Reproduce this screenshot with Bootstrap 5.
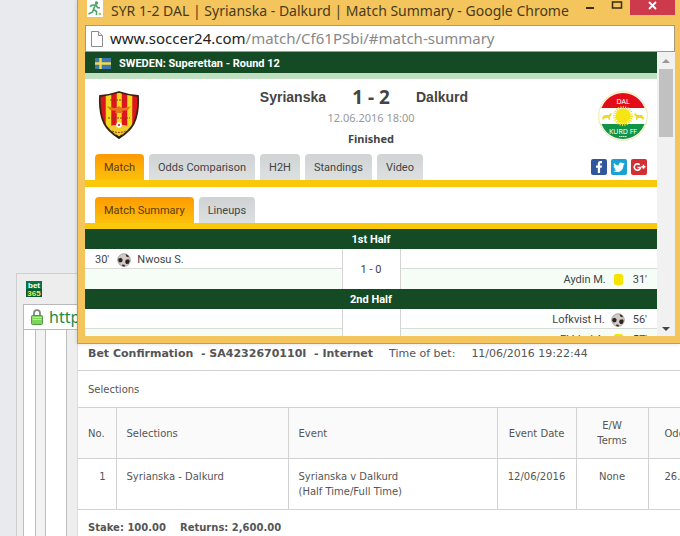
<!DOCTYPE html>
<html lang="en">
<head>
<meta charset="utf-8">
<meta name="viewport" content="width=device-width, initial-scale=1">
<title>SYR 1-2 DAL | Syrianska - Dalkurd | Match Summary</title>
<link rel="stylesheet" href="https://cdn.jsdelivr.net/npm/bootstrap@5.3.0/dist/css/bootstrap.min.css">
<style>
  body { font-family: "Noto Sans", sans-serif; background: #e9eaee; }
  svg { display: block; flex: none; }
  .desktop { background: #e9eaee; }

  /* bet slip window */
  .slip-window { left: 16px; right: 0; top: 273px; bottom: 0; background: #ededee; border: 1px solid #cfcfcf; border-width: 1px 0 0 1px; padding-left: 6px; }
  .slip-title { height: 30px; padding: 7px 3px; }
  .slip-url { height: 27px; border: 1px solid #b9b9b9; border-right: 0; padding-left: 7px; font-size: 16px; gap: 6px; }
  .slip-url a { color: #218a46; }
  .slip-body { border-left: 1px solid #bdbdbd; }
  .gutter-a { width: 11px; border: 1px solid #bdbdbd; border-width: 0 1px; background: #f2f2f2; margin-left: 11px; }
  .gutter-b { width: 32px; background: linear-gradient(90deg, #fff 20px, #bdbdbd 20px, #bdbdbd 21px, #eee 21px, #eee 31px, #dcdcdc 31px); }
  .slip-page { font: 10px/15px "DejaVu Sans", sans-serif; color: #555; }
  .slip-head { font-size: 11px; line-height: 15px; padding: 16px 10px 9px; border-bottom: 1px solid #d2d2d2; height: 41px; gap: 16px; }
  .slip-label { padding: 11px 10px 10px; height: 36px; }
  .bets { width: 642px; table-layout: fixed; border-collapse: collapse; }
  .bets th, .bets td { border: 1px solid #d2d2d2; border-left: 0; padding: 10px; height: 51px; font-weight: 400; }
  .bets th { background: #fafafa; vertical-align: middle; }
  .bets td { vertical-align: top; }
  .bets .c-date { padding-left: 4px; padding-right: 4px; }
  .bets .c-odds { padding-left: 16px; }
  .slip-total { padding: 10px; gap: 14px; }

  /* match window */
  .match-window { left: 77px; right: 0; top: 0; height: 344px; background: #f4c55c; border: 1px solid #c99b3d; border-top: 0; border-right: 0; padding: 0 5px 7px 7px; box-shadow: 0 0 4px rgba(0,0,0,.15); }
  .title-bar { height: 25px; color: #4a3a1a; font-size: 14px; line-height: 21px; padding-left: 2px; }
  .win-btn { border: 0; background: none; padding: 0; height: 15px; }
  .win-btn-min { width: 28px; }
  .win-btn-max { width: 26px; }
  .win-btn-close { width: 45px; background: #cc3a4b; }
  .address { height: 27px; border: 1px solid #a99a74; border-bottom-color: #999; background: #fff; padding-left: 5px; font-size: 15px; color: #222; gap: 7px; }
  .address span span { color: #888; }
  .page-area { background: #fff; font: 11px/14px Roboto, sans-serif; color: #444; }
  .league { background: #144b25; color: #fff; height: 21px; padding: 2px 0 0 10px; }
  .league-strip { background: #bfdfc0; height: 6px; }
  .match-head { padding: 8px 9px 0; height: 75px; }
  .result { font-family: "Noto Sans", sans-serif; }
  .team-name { font: 700 14px/18px "Liberation Sans", sans-serif; flex: 1 1 0; }
  .score { font-size: 19px; line-height: 20px; width: 90px; }
  .kickoff { color: #999; margin-top: 4px; }
  .status { margin-top: 7px; }
  .tab-strip { border-bottom: 7px solid #fac80b; padding: 0 10px; gap: 5px; }
  .tab-strip.second { border-bottom-width: 6px; margin-top: 10px; }
  .tab-btn { border: 0; border-radius: 4px 4px 0 0; height: 26px; padding: 2px 9px 0; background: linear-gradient(#cfd3d3, #dde0e0); color: #444; line-height: 24px; }
  .tab-btn.current { background: linear-gradient(#ff9a02, #fcc00a); color: #5c3b05; }
  .events { table-layout: fixed; border-collapse: separate; border-spacing: 0; width: 100%; }
  .events .mid { width: 59px; }
  .events th { background: #144b25; color: #fff; height: 20px; text-align: center; padding: 1px 0 0; }
  .events td { height: 20px; padding: 2px 10px 0; border-bottom: 1px solid #d8ddd8; }
  .events tr.alt td { background: #f6fdf6; border-bottom-color: #f6fdf6; }
  .events td.mid-score { background: #fff; border: 1px solid #d4d4d4; border-width: 0 1px; text-align: center; padding: 2px 0 0; }
  .ycard { width: 9px; height: 11px; border-radius: 2px; background: #f5e400; margin: 0 10px 0 8px; }
  .events svg { margin: 0 6px 0 8px; }
  .events .away svg { margin: 0 8px 0 6px; }
  .scroll-rail { width: 18px; background: #f1f1f1; padding: 7px 2px 5px; }
  .scroll-thumb { width: 14px; height: 68px; background: #c1c1c1; margin-top: 6px; }
</style>
<script src="https://cdn.jsdelivr.net/npm/bootstrap@5.3.0/dist/js/bootstrap.bundle.min.js"></script>
</head>
<body>
<svg width="0" height="0" class="position-absolute" aria-hidden="true">
  <symbol id="ball" viewBox="0 0 14 14">
    <circle cx="7" cy="7" r="6.3" fill="#d3ccc6" stroke="#9a948e" stroke-width=".8"/>
    <path d="M1.500 5.500l2.500-.8 1.700 1.800-.6 2.600-2.600.3-1.300-1.700zM8.500 1l2.700 1.500.8 1.700-2.500-.5zM8.800 6.800l2.700-.6 1.300 1.800-1.200 2.700-2.500.2-1-2zM5 11.500l2.500.3.500 1.700-2.500-.3z" fill="#2b2422"/>
  </symbol>
</svg>
<main class="desktop position-relative vh-100 overflow-hidden">

  <section class="slip-window position-absolute d-flex flex-column">
    <div class="slip-title">
      <svg width="16" height="16" viewBox="0 0 16 16" role="img" aria-label="bet365"><rect width="16" height="16" fill="#08733f"/><rect y="8" width="16" height="8" fill="#075a32"/><text x="8" y="7" text-anchor="middle" font-family="Liberation Sans" font-weight="700" font-size="8" fill="#fff">bet</text><text x="8" y="15" text-anchor="middle" font-family="Liberation Sans" font-weight="700" font-size="8" fill="#f5e94a">365</text></svg>
    </div>
    <div class="slip-url bg-white d-flex align-items-center">
      <svg width="12" height="16" viewBox="0 0 12 16"><path d="M3 8V4.200a3 3 0 0 1 6 0V8" fill="none" stroke="#7d8a7d" stroke-width="1.800"/><rect x=".5" y="6.500" width="11" height="9" rx="1" fill="#7fd35f" stroke="#4f9a3c"/><path d="M1.500 8.500h9M1.500 10.500h9" stroke="#b2ec98"/></svg>
      <a href="#" class="text-decoration-none">https</a>
    </div>
    <div class="slip-body d-flex flex-grow-1 bg-white overflow-hidden">
      <div class="gutter-a flex-shrink-0"></div>
      <div class="gutter-b flex-shrink-0"></div>
      <div class="slip-page flex-grow-1 overflow-hidden">
        <div class="slip-head d-flex text-nowrap"><b>Bet Confirmation &nbsp;- SA4232670110I &nbsp;- Internet</b><span>Time of bet:</span><span>11/06/2016 19:22:44</span></div>
        <div class="slip-label">Selections</div>
        <table class="bets">
          <colgroup><col style="width:38px"><col style="width:172px"><col style="width:209px"><col style="width:79px"><col style="width:72px"><col style="width:72px"></colgroup>
          <thead><tr><th>No.</th><th>Selections</th><th>Event</th><th class="c-date text-center">Event Date</th><th class="text-center">E/W Terms</th><th class="c-odds">Odds</th></tr></thead>
          <tbody><tr><td class="text-end">1</td><td>Syrianska - Dalkurd</td><td>Syrianska v Dalkurd<br>(Half Time/Full Time)</td><td class="c-date text-center">12/06/2016</td><td class="text-center">None</td><td class="c-odds">26.00</td></tr></tbody>
        </table>
        <div class="slip-total d-flex fw-bold"><span>Stake: 100.00</span><span>Returns: 2,600.00</span></div>
      </div>
    </div>
  </section>

  <section class="match-window position-absolute d-flex flex-column">
    <header class="title-bar d-flex align-items-start flex-shrink-0">
      <svg width="16" height="17" viewBox="0 0 16 17"><rect width="16" height="17" fill="#fff"/><circle cx="9.500" cy="3" r="1.700" fill="#4aa564"/><path d="M3 6.500 5.500 5h3.500l1.500 2.500 2.500.5M8 5.500 6.500 9.500l3 2V15M6.500 9.500 5.500 12l-4 2" fill="none" stroke="#4aa564" stroke-width="1.600"/><circle cx="12.800" cy="14" r="1.300" fill="#9cc94f"/></svg>
      <div class="ms-2 flex-grow-1 text-nowrap">SYR 1-2 DAL | Syrianska - Dalkurd | Match Summary - Google Chrome</div>
      <button type="button" class="win-btn win-btn-min" aria-label="Minimize"><svg width="28" height="15"><path d="M10 8h8" stroke="#3a2b12" stroke-width="2"/></svg></button>
      <button type="button" class="win-btn win-btn-max" aria-label="Maximize"><svg width="26" height="15"><path d="M8.500 2h9v6h-9z" fill="none" stroke="#3a2b12" stroke-width="1.500"/></svg></button>
      <button type="button" class="win-btn win-btn-close" aria-label="Close"><svg width="45" height="15"><path d="m19 2 7 7M26 2l-7 7" stroke="#fff" stroke-width="1.800"/></svg></button>
    </header>
    <div class="address d-flex align-items-center flex-shrink-0">
      <svg width="12" height="16" viewBox="0 0 12 16"><path d="M.5.500h7l4 4v11H.5z" fill="#fff" stroke="#8a8a8a"/><path d="M7.500.500v4h4" fill="#eee" stroke="#8a8a8a"/></svg>
      <span>www.soccer24.com<span>/match/Cf61PSbi/#match-summary</span></span>
    </div>
    <div class="page-area d-flex flex-grow-1 overflow-hidden">
      <div class="flex-grow-1 overflow-hidden">
        <div class="league d-flex align-items-center fw-bold">
          <svg width="16" height="11" viewBox="0 0 16 11"><rect width="16" height="11" fill="#3d78b0"/><path d="M0 5.500h16M5.500 0v11" stroke="#f0dc4a" stroke-width="2.400"/></svg>
          <span class="ms-2">SWEDEN: Superettan - Round 12</span>
        </div>
        <div class="league-strip"></div>
        <div class="match-head d-flex justify-content-between">
          <svg class="mt-1 ms-1 me-1" width="42" height="48" viewBox="0 0 42 48" role="img" aria-label="Syrianska crest">
            <clipPath id="shield"><path d="M2 5Q12 4 21 1q9 3 19 4 1 16-4 27-4 8-15 15Q10 40 6 32 1 21 2 5z"/></clipPath>
            <g clip-path="url(#shield)"><rect width="42" height="48" fill="#f8d81c"/><path d="M5 0v36M16 0v36M26.500 0v36M37 0v36" stroke="#dd151c" stroke-width="5.500"/><path d="M4 37l12-3h10l12 3v11H4z" fill="#f2cd2a"/></g>
            <path d="M2 5Q12 4 21 1q9 3 19 4 1 16-4 27-4 8-15 15Q10 40 6 32 1 21 2 5z" fill="none" stroke="#3c2310" stroke-width="1.800"/>
            <path d="M9 15q6 2 9 2l3-2 3 2q3 0 9-2l-3 4-6 1 1 2h-8l1-2-6-1z" fill="#e8741c"/>
            <path d="M12 9h18M10 27h22M14 40q7 3 14 0" fill="none" stroke="#8f3a13" stroke-width="1" stroke-dasharray="2 1"/>
            <circle cx="21" cy="34" r="2.800" fill="#fff"/><circle cx="21" cy="34" r="1" fill="#9b1c25"/><path d="M18 44l3 2.500 3-2.500" fill="none" stroke="#1a1a1a" stroke-width="1.500"/>
          </svg>
          <div class="result flex-grow-1 text-center">
            <div class="d-flex align-items-center fw-bold"><span class="team-name text-end">Syrianska</span><span class="score">1 - 2</span><span class="team-name text-start">Dalkurd</span></div>
            <div class="kickoff">12.06.2016 18:00</div>
            <div class="status fw-bold">Finished</div>
          </div>
          <svg class="mt-1" width="50" height="50" viewBox="0 0 50 50" role="img" aria-label="Dalkurd crest">
            <clipPath id="disc"><circle cx="25" cy="25" r="23"/></clipPath>
            <circle cx="25" cy="25" r="24.300" fill="#fff" stroke="#f3e7a0"/>
            <g clip-path="url(#disc)"><rect width="50" height="17" fill="#e30d17"/><rect y="33" width="50" height="17" fill="#109447"/></g>
            <circle cx="25" cy="25" r="8.500" fill="none" stroke="#f4e01a" stroke-width="3" stroke-dasharray="1 1.200"/><circle cx="25" cy="25" r="7.500" fill="#f6e515"/>
            <path d="M4 27l2-3h5l1.500-2 1.500 1-2 3v3h-1l-1-2H7l-2 2zM46 27l-2-3h-5l-1.500-2-1.500 1 2 3v3h1l1-2h3l2 2z" fill="#eadb2a"/>
            <text x="25" y="13" text-anchor="middle" font-family="Noto Sans" font-size="7" fill="#fff">DAL</text>
            <text x="25" y="43" text-anchor="middle" font-family="Noto Sans" font-size="7" fill="#fff">KURD FF</text>
            <path d="M21 45.500h8" stroke="#d8efdf" stroke-width="1" stroke-dasharray="1.500 .5"/>
          </svg>
        </div>
        <nav class="tab-strip d-flex align-items-end">
          <button type="button" class="tab-btn current">Match</button><button type="button" class="tab-btn">Odds Comparison</button><button type="button" class="tab-btn">H2H</button><button type="button" class="tab-btn">Standings</button><button type="button" class="tab-btn">Video</button>
          <div class="ms-auto d-flex gap-1 align-self-center">
            <a href="#" aria-label="Facebook"><svg width="16" height="16" viewBox="0 0 16 16"><rect width="16" height="16" rx="2" fill="#30579b"/><path d="M6.800 14V8.800H5V6.600h1.800V5c0-1.900 1-2.900 2.700-2.900h1.500v2.200H10c-.7 0-.9.300-.9.900v1.400H11l-.3 2.200H9.100V14z" fill="#fff"/></svg></a>
            <a href="#" aria-label="Twitter"><svg width="16" height="16" viewBox="0 0 16 16"><rect width="16" height="16" rx="2" fill="#1aa1d4"/><path d="M13.800 4.600c-.4.200-.9.300-1.400.4.500-.3.900-.8 1-1.300-.4.300-1 .5-1.500.6a2.400 2.400 0 0 0-4.100 2.200C5.900 6.400 4.100 5.500 3 4.100c-.7 1.200-.2 2.500.7 3.200-.4 0-.8-.1-1.100-.3 0 1.200.8 2.100 1.900 2.400-.3.100-.7.100-1.100 0 .3 1 1.200 1.600 2.300 1.700-1 .8-2.200 1.100-3.500 1 4.700 2.700 10.400-.2 10.300-6.200.5-.4.900-.8 1.300-1.300z" fill="#fff"/></svg></a>
            <a href="#" aria-label="Google Plus"><svg width="16" height="16" viewBox="0 0 16 16"><rect width="16" height="16" rx="2" fill="#d42e32"/><path d="M8.700 5.800A3.200 3.200 0 1 0 9.600 8.500H6.500M10.500 7.800h4M12.500 5.800v4" fill="none" stroke="#fff" stroke-width="1.600"/></svg></a>
          </div>
        </nav>
        <nav class="tab-strip second d-flex align-items-end">
          <button type="button" class="tab-btn current">Match Summary</button><button type="button" class="tab-btn">Lineups</button>
        </nav>
        <table class="events">
          <colgroup><col><col class="mid"><col></colgroup>
          <tbody>
            <tr><th colspan="3">1st Half</th></tr>
            <tr><td><div class="d-flex align-items-center">30'<svg width="14" height="14"><use href="#ball"/></svg>Nwosu S.</div></td><td class="mid-score" rowspan="2">1 - 0</td><td></td></tr>
            <tr class="alt"><td></td><td class="away"><div class="d-flex align-items-center justify-content-end">Aydin M.<span class="ycard"></span>31'</div></td></tr>
            <tr><th colspan="3">2nd Half</th></tr>
            <tr><td></td><td class="mid-score" rowspan="2"></td><td class="away"><div class="d-flex align-items-center justify-content-end">Lofkvist H.<svg width="14" height="14"><use href="#ball"/></svg>56'</div></td></tr>
            <tr class="alt"><td></td><td class="away"><div class="d-flex align-items-center justify-content-end">Ekblad A.<span class="ycard"></span>57'</div></td></tr>
          </tbody>
        </table>
      </div>
      <div class="scroll-rail d-flex flex-column align-items-center flex-shrink-0">
        <svg width="8" height="4"><path d="M0 4l4-4 4 4z" fill="#999"/></svg>
        <div class="scroll-thumb"></div>
        <svg class="mt-auto" width="8" height="4"><path d="M0 0l4 4 4-4z" fill="#444"/></svg>
      </div>
    </div>
  </section>
</main>
</body>
</html>
